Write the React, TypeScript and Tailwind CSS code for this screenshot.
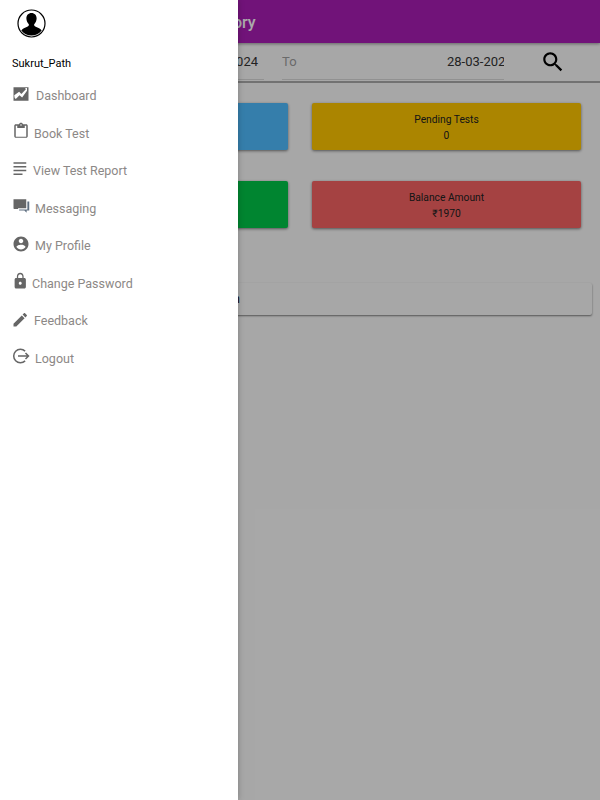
import type { ReactNode } from 'react';

const Icon = ({ children }: { children: ReactNode }) => (
  <svg viewBox="0 0 24 24" className="mb-[6px] h-[18px] w-[18px] shrink-0 fill-[#666666]">
    {children}
  </svg>
);

const menu = [
  {
    label: 'Dashboard',
    gap: 'ml-[6px]',
    icon: <path d="M2 3h20v18H2zm1.500 14 1.500 1.500 5-5 3.500 3L20 7.500V4h-2.500l1 1.500-6 6.500-3-3L3 13.500z" fillRule="evenodd" />,
  },
  {
    label: 'Book Test',
    gap: 'ml-[4px]',
    icon: <path d="M19 3h-4.200C14.400 1.800 13.300 1 12 1s-2.400.8-2.800 2H5c-1.100 0-2 .9-2 2v14c0 1.100.9 2 2 2h14c1.100 0 2-.9 2-2V5c0-1.100-.9-2-2-2zm-7 0c.6 0 1 .4 1 1s-.4 1-1 1-1-.4-1-1 .4-1 1-1zm7 16.500H5V5h2v3h10V5h2v14.500z" />,
  },
  {
    label: 'View Test Report',
    gap: 'ml-[3px]',
    icon: <path d="M2 3h17v2H2zM2 8h17v2H2zM2 13h17v2H2zM2 18h12v2H2z" />,
  },
  {
    label: 'Messaging',
    gap: 'ml-[5px]',
    icon: (
      <>
        <path d="M2 3h17v12H8v1H3q-1 0-1-1z" />
        <path d="M20.500 6H23v12h-3.500v3l-3-3h-7v-1.500h11z" fill="#5f6f80" />
      </>
    ),
  },
  {
    label: 'My Profile',
    gap: 'ml-[5px]',
    icon: <path d="M12 2C6.500 2 2 6.500 2 12s4.500 10 10 10 10-4.500 10-10S17.500 2 12 2zm0 3c1.700 0 3 1.300 3 3s-1.300 3-3 3-3-1.300-3-3 1.300-3 3-3zm0 14.200c-2.500 0-4.700-1.300-6-3.200 0-2 4-3.100 6-3.100s6 1.100 6 3.100c-1.300 1.900-3.500 3.200-6 3.200z" />,
  },
  {
    label: 'Change Password',
    gap: 'ml-[2px]',
    icon: <path d="M16.500 8h-1V6c0-2.800-1.700-5-4.500-5S6.500 3.200 6.500 6v2h-1c-1.100 0-2 .9-2 2v10c0 1.100.9 2 2 2h11c1.100 0 2-.9 2-2V10c0-1.100-.9-2-2-2zM11 17c-1.100 0-2-.9-2-2s.9-2 2-2 2 .9 2 2-.9 2-2 2zm2.800-9H8.200V6c0-1.700 1.100-3.100 2.800-3.100s2.800 1.400 2.800 3.100v2z" />,
  },
  {
    label: 'Feedback',
    gap: 'ml-[4px]',
    icon: <path d="M2 18.250V22h3.750L16.800 10.940l-3.750-3.750L2 18.250zM19.700 8.040c.4-.4.4-1 0-1.400l-2.340-2.340c-.4-.4-1-.4-1.400 0l-1.830 1.830 3.750 3.750 1.820-1.840z" />,
  },
];

function StatCard({ title, value, color }: { title: string; value: string; color: string }) {
  return (
    <div className={`flex h-[47px] w-[269px] flex-col items-center justify-center rounded-[2px] pt-[2px] text-[10.250px] leading-[16px] text-[#212121] shadow-[0_1px_3px_rgba(0,0,0,0.5)] ${color}`}>
      <span>{title}</span>
      <span>{value}</span>
    </div>
  );
}

export default function App() {
  return (
    <div className="relative h-[800px] w-[600px] overflow-hidden bg-[#fafafa] font-['Roboto',sans-serif]">
      {/* page behind the drawer */}
      <div className="flex h-[43px] items-center bg-[#a91db5] pl-[169px] pt-[2px] text-[16px] font-medium text-white shadow-[0_1px_3px_rgba(0,0,0,0.4)]">
        <span>Test History</span>
      </div>
      <div className="flex h-[40px] items-start border-b-2 border-[#aaaaaa] pl-[120px]">
        <div className="flex h-[37px] w-[144px] items-center justify-end border-b border-[#d8d8d8] pr-[6px] pt-[2px] text-[13px] text-[#333333]">28-03-2024</div>
        <div className="ml-[18px] flex h-[37px] w-[222px] items-center justify-between overflow-hidden border-b border-[#d8d8d8] pt-[2px] text-[13px]">
          <span className="text-[#9e9e9e]">To</span>
          <span className="w-[57px] whitespace-nowrap text-[#333333]">28-03-2024</span>
        </div>
        <svg viewBox="0 0 24 24" className="ml-[36px] mt-[6px] h-[26px] w-[26px] fill-black">
          <path d="M15.500 14h-.79l-.28-.27C15.410 12.590 16 11.110 16 9.500 16 5.910 13.090 3 9.500 3S3 5.910 3 9.500 5.910 16 9.500 16c1.610 0 3.090-.59 4.230-1.570l.27.28v.79l5 4.990L20.490 19l-4.990-5zm-6 0C7.010 14 5 11.990 5 9.500S7.010 5 9.500 5 14 7.010 14 9.500 11.990 14 9.500 14z" />
        </svg>
      </div>
      <div className="mt-[20px] ml-[19px] grid w-[562px] grid-cols-[269px_269px] justify-between gap-y-[31px]">
        <StatCard title="Total Tests" value="0" color="bg-[#4fbcff]" />
        <StatCard title="Pending Tests" value="0" color="bg-[#ffc700]" />
        <StatCard title="Completed Tests" value="0" color="bg-[#00c748]" />
        <StatCard title="Balance Amount" value="₹1970" color="bg-[#f66363]" />
      </div>
      <div className="ml-[8px] mt-[55px] flex h-[32px] w-[584px] items-center rounded-[2px] bg-[#fafafa] pl-[117px] text-[13px] text-[#111111] shadow-[0_1px_2px_rgba(0,0,0,0.5)]">
        <span className="w-[115px] overflow-hidden whitespace-nowrap text-right">Recent Transaction</span>
      </div>

      {/* scrim */}
      <div className="absolute inset-0 bg-black/33" />

      {/* drawer */}
      <aside className="absolute inset-y-0 left-0 w-[238px] bg-white shadow-[0_0_6px_rgba(0,0,0,0.25)]">
        <div className="ml-[17px] mt-[9px] h-[29px] w-[29px]">
          <svg viewBox="0 0 29 29" className="h-[29px] w-[29px]">
            <circle cx="14.500" cy="14.500" r="13.500" fill="white" stroke="black" strokeWidth="1.200" />
            <path d="M14.500 4c3.300 0 5.300 2.500 5.100 5.800-.1 2.200-1 4.200-2.400 5.400-.3 1.200.3 2 1.500 2.500 2.300 1 4.800 1.800 6 3.800a13 13 0 0 1-20.400 0c1.200-2 3.700-2.800 6-3.800 1.200-.5 1.800-1.300 1.500-2.500-1.400-1.200-2.300-3.200-2.400-5.400C9.200 6.500 11.200 4 14.500 4z" fill="black" />
          </svg>
        </div>
        <div className="ml-[12px] mt-[18px] text-[11px] leading-[16px] text-black">Sukrut_Path</div>
        <nav className="ml-[12px] mt-[6px] flex flex-col">
          {menu.map((item) => (
            <div key={item.label} className="flex h-[37.500px] items-center">
              <Icon>{item.icon}</Icon>
              <span className={`${item.gap} text-[12.500px] text-[#8c8886]`}>{item.label}</span>
            </div>
          ))}
          <div className="flex h-[37.500px] items-center">
            <svg viewBox="0 0 24 24" className="mb-[6px] h-[18px] w-[18px] shrink-0 fill-none stroke-[#666666] stroke-2">
              <path d="M17.500 5.500A9 9 0 1 0 17.500 18.500" />
              <path d="M8 12h14M18 8l4 4-4 4" />
            </svg>
            <span className="ml-[5px] text-[12.500px] text-[#8c8886]">Logout</span>
          </div>
        </nav>
      </aside>
    </div>
  );
}
